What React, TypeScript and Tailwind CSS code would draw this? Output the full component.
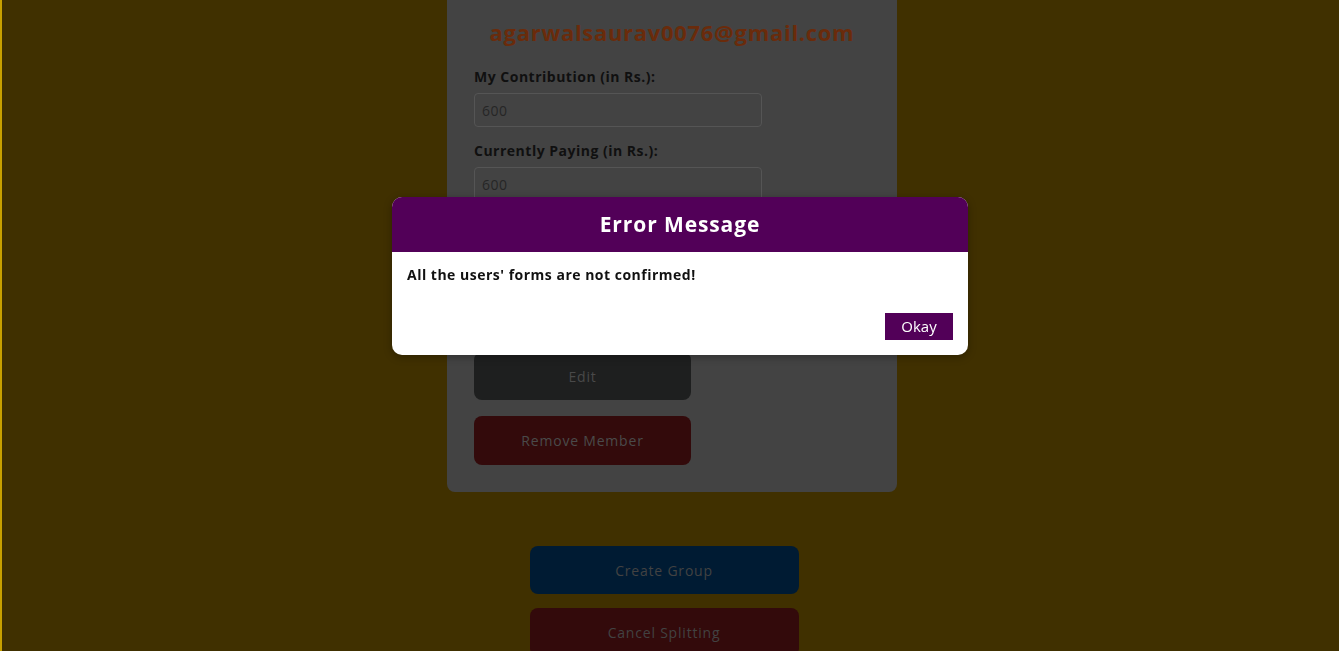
import React from "react";

const font = { fontFamily: "'Open Sans', 'DejaVu Sans', sans-serif" };

const Field = ({ label, value }: { label: string; value: string }) => (
  <div className="flex flex-col gap-[6px]">
    <label className="text-[14px] leading-[20px] font-bold tracking-[0.5px] text-[#101010]">{label}</label>
    <input
      readOnly
      value={value}
      className="w-[288px] h-[34px] rounded-[4px] border border-[#555555] bg-[#434343] px-[7px] text-[14px] tracking-[0.5px] text-[#262626] outline-none"
    />
  </div>
);

const App = () => {
  return (
    <div style={font} className="min-h-screen h-[651px] overflow-hidden bg-[#403000] border-l-2 border-[#c8a000] flex flex-col items-center">
      <div className="ml-[3px] w-[450px] bg-[#434343] rounded-b-[8px] px-[27px] pt-[17px] pb-[27px] flex flex-col">
        <h2 className="text-center text-[22px] leading-[30px] font-bold tracking-[0.7px] text-[#6a2b0b]">
          agarwalsaurav0076@gmail.com
        </h2>
        <div className="mt-[20px] flex flex-col gap-[14px]">
          <Field label="My Contribution (in Rs.):" value="600" />
          <Field label="Currently Paying (in Rs.):" value="600" />
          <Field label="Status:" value="Pending" />
        </div>
        <div className="mt-[13px] flex flex-col gap-[16px]">
          <button className="w-[217px] h-[48px] rounded-[8px] bg-[#0a2a12] text-[14px] tracking-[0.8px] text-[#404040]">Confirm</button>
          <button className="w-[217px] h-[48px] rounded-[8px] bg-[#1e1f1f] text-[14px] tracking-[0.8px] text-[#494949]">Edit</button>
          <button className="w-[217px] h-[49px] rounded-[8px] bg-[#330a0b] text-[14px] tracking-[0.8px] text-[#4a4a4a]">Remove Member</button>
        </div>
      </div>

      <div className="mt-[54px] ml-[-13px] flex flex-col gap-[14px]">
        <button className="w-[269px] h-[48px] rounded-[8px] bg-[#001b33] text-[14px] tracking-[0.8px] text-[#424242]">Create Group</button>
        <button className="w-[269px] h-[48px] rounded-[8px] bg-[#330a0b] text-[14px] tracking-[0.8px] text-[#424242]">Cancel Splitting</button>
      </div>

      <div className="fixed left-[392px] top-[197px] w-[576px] h-[158px] rounded-[10px] bg-white overflow-hidden shadow-[0_2px_8px_rgba(0,0,0,0.3)] flex flex-col">
        <div className="h-[55px] bg-[#520058] flex items-center justify-center">
          <h3 className="text-white text-[21px] font-bold tracking-[0.9px]">Error Message</h3>
        </div>
        <div className="flex-1 flex flex-col px-[15px] pt-[13px] pb-[15px]">
          <p className="text-[14px] leading-[20px] font-bold tracking-[0.5px] text-[#111111]">All the users' forms are not confirmed!</p>
          <div className="mt-auto flex justify-end">
            <button className="w-[68px] h-[27px] bg-[#520058] text-white text-[15px]">Okay</button>
          </div>
        </div>
      </div>
    </div>
  );
};

export default App;
